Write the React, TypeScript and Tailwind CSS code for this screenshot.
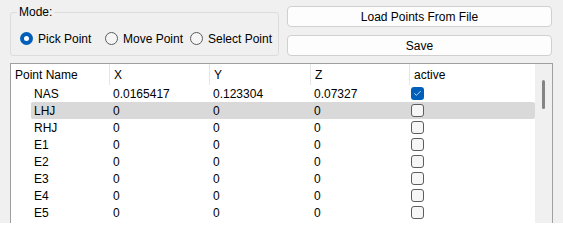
import { Check } from "lucide-react";

type Row = { name: string; x: string; y: string; z: string; active: boolean };

const rows: Row[] = [
  { name: "NAS", x: "0.0165417", y: "0.123304", z: "0.07327", active: true },
  { name: "LHJ", x: "0", y: "0", z: "0", active: false },
  { name: "RHJ", x: "0", y: "0", z: "0", active: false },
  { name: "E1", x: "0", y: "0", z: "0", active: false },
  { name: "E2", x: "0", y: "0", z: "0", active: false },
  { name: "E3", x: "0", y: "0", z: "0", active: false },
  { name: "E4", x: "0", y: "0", z: "0", active: false },
  { name: "E5", x: "0", y: "0", z: "0", active: false },
];

const Radio = ({ checked, label }: { checked?: boolean; label: string }) => (
  <div className="w-[85px] flex items-center gap-[5px] whitespace-nowrap">
    {checked ? (
      <span className="shrink-0 w-[13px] h-[13px] rounded-full bg-[#005fb8] flex items-center justify-center">
        <span className="w-[5px] h-[5px] rounded-full bg-white" />
      </span>
    ) : (
      <span className="shrink-0 w-[13px] h-[13px] rounded-full border border-[#5d5d5d] bg-[#f5f5f5]" />
    )}
    <span>{label}</span>
  </div>
);

const CheckBox = ({ checked }: { checked: boolean }) =>
  checked ? (
    <span className="w-[13px] h-[13px] rounded-[3px] bg-[#005fb8] flex items-center justify-center">
      <Check className="w-[9px] h-[9px] text-white" strokeWidth={2} />
    </span>
  ) : (
    <span className="w-[13px] h-[13px] rounded-[3px] border border-[#5d5d5d] bg-[#f6f6f6]" />
  );

const App = () => {
  return (
    <div className="w-[563px] h-[223px] bg-[#f0f0f0] overflow-hidden text-[12px] text-black font-['Liberation_Sans',sans-serif] leading-none">
      {/* Top controls */}
      <div className="flex pt-[6px] pl-[10px]">
        <div className="relative mt-[6px] w-[269px] h-[44px] border border-[#dcdcdc] rounded-[3px]">
          <span className="absolute -top-[7px] left-[6px] px-[2px] bg-[#f0f0f0]">Mode:</span>
          <div className="flex items-center h-full pl-[9px] pt-[9px]">
            <Radio checked label="Pick Point" />
            <Radio label="Move Point" />
            <Radio label="Select Point" />
          </div>
        </div>
        <div className="ml-[8px] w-[265px] flex flex-col gap-[8px]">
          <button className="h-[21px] rounded-[4px] border border-[#d0d0d0] bg-[#fdfdfd] text-center">
            Load Points From File
          </button>
          <button className="h-[21px] rounded-[4px] border border-[#d0d0d0] bg-[#fdfdfd] text-center">
            Save
          </button>
        </div>
      </div>

      {/* Table */}
      <div className="mt-[7px] ml-[10px] w-[543px] h-[200px] border border-[#a0a0a0] bg-white flex">
        <div className="flex-1">
          <div className="flex h-[21px] items-center">
            <div className="w-[99px] h-full pl-[4px] flex items-center border-r border-[#e5e5e5]">Point Name</div>
            <div className="w-[100px] h-full pl-[4px] flex items-center border-r border-[#e5e5e5]">X</div>
            <div className="w-[101px] h-full pl-[4px] flex items-center border-r border-[#e5e5e5]">Y</div>
            <div className="w-[99px] h-full pl-[4px] flex items-center border-r border-[#e5e5e5]">Z</div>
            <div className="flex-1 h-full pl-[4px] flex items-center">active</div>
          </div>
          {rows.map((r, i) => (
            <div
              key={r.name}
              className={`ml-[20px] flex h-[17px] items-center rounded-[2px] ${i === 1 ? "bg-[#d9d9d9]" : ""}`}
            >
              <div className="w-[79px] pl-[3px]">{r.name}</div>
              <div className="w-[100px] pl-[3px]">{r.x}</div>
              <div className="w-[101px] pl-[3px]">{r.y}</div>
              <div className="w-[99px] pl-[3px]">{r.z}</div>
              <div className="flex-1 pl-[1px] flex items-center">
                <CheckBox checked={r.active} />
              </div>
            </div>
          ))}
        </div>
        <div className="w-[17px] bg-[#f0f0f0] flex justify-center pt-[16px]">
          <div className="w-[3px] h-[29px] rounded-full bg-[#858585]" />
        </div>
      </div>
    </div>
  );
};

export default App;
